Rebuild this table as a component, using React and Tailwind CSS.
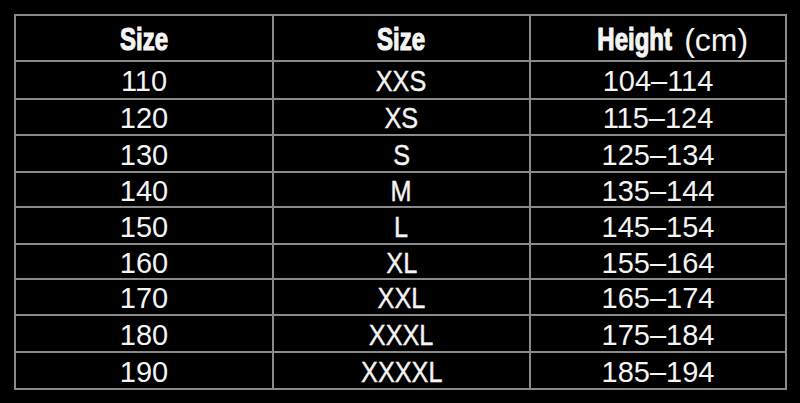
const ROWS = [
  ["110", "XXS", "104–114"],
  ["120", "XS", "115–124"],
  ["130", "S", "125–134"],
  ["140", "M", "135–144"],
  ["150", "L", "145–154"],
  ["160", "XL", "155–164"],
  ["170", "XXL", "165–174"],
  ["180", "XXXL", "175–184"],
  ["190", "XXXXL", "185–194"],
];

const num = "font-['Liberation_Sans',Arial,sans-serif] text-[29px] leading-none";
const letters =
  "inline-block scale-x-[0.87] font-['Liberation_Sans',Arial,sans-serif] text-[29px] leading-none [-webkit-text-stroke:0.4px_#f4f4f4]";
const head =
  "inline-block scale-x-[0.8] scale-y-[1.05] font-['Liberation_Sans',Arial,sans-serif] font-bold text-[30px] leading-none [-webkit-text-stroke:1.1px_#f4f4f4]";

function Cell({ className = "", children }) {
  return (
    <div className={`flex items-center justify-center bg-black pt-[3px] text-[#f4f4f4] ${className}`}>
      {children}
    </div>
  );
}

export default function App() {
  return (
    <div className="w-[800px] h-[403px] bg-black pt-[14px] pl-[14px]">
      <div className="grid w-[773px] grid-cols-[256px_255px_254px] grid-rows-[44px_36px_34px_35px_33px_35px_33px_34px_35px_35px] gap-[2px] bg-[#8a8a8a] p-[2px]">
        <Cell>
          <span className={head}>Size</span>
        </Cell>
        <Cell>
          <span className={head}>Size</span>
        </Cell>
        <Cell className="pl-[20px]">
          <span className={`${head} -mr-[8px]`}>Height</span>
          <span className="ml-[11px] font-['Liberation_Sans',Arial,sans-serif] text-[32px] leading-none">(cm)</span>
        </Cell>
        {ROWS.map(([a, b, c]) => (
          <div key={a} className="contents">
            <Cell className={num}>{a}</Cell>
            <Cell>
              <span className={letters}>{b}</span>
            </Cell>
            <Cell className={num}>{c}</Cell>
          </div>
        ))}
      </div>
    </div>
  );
}
